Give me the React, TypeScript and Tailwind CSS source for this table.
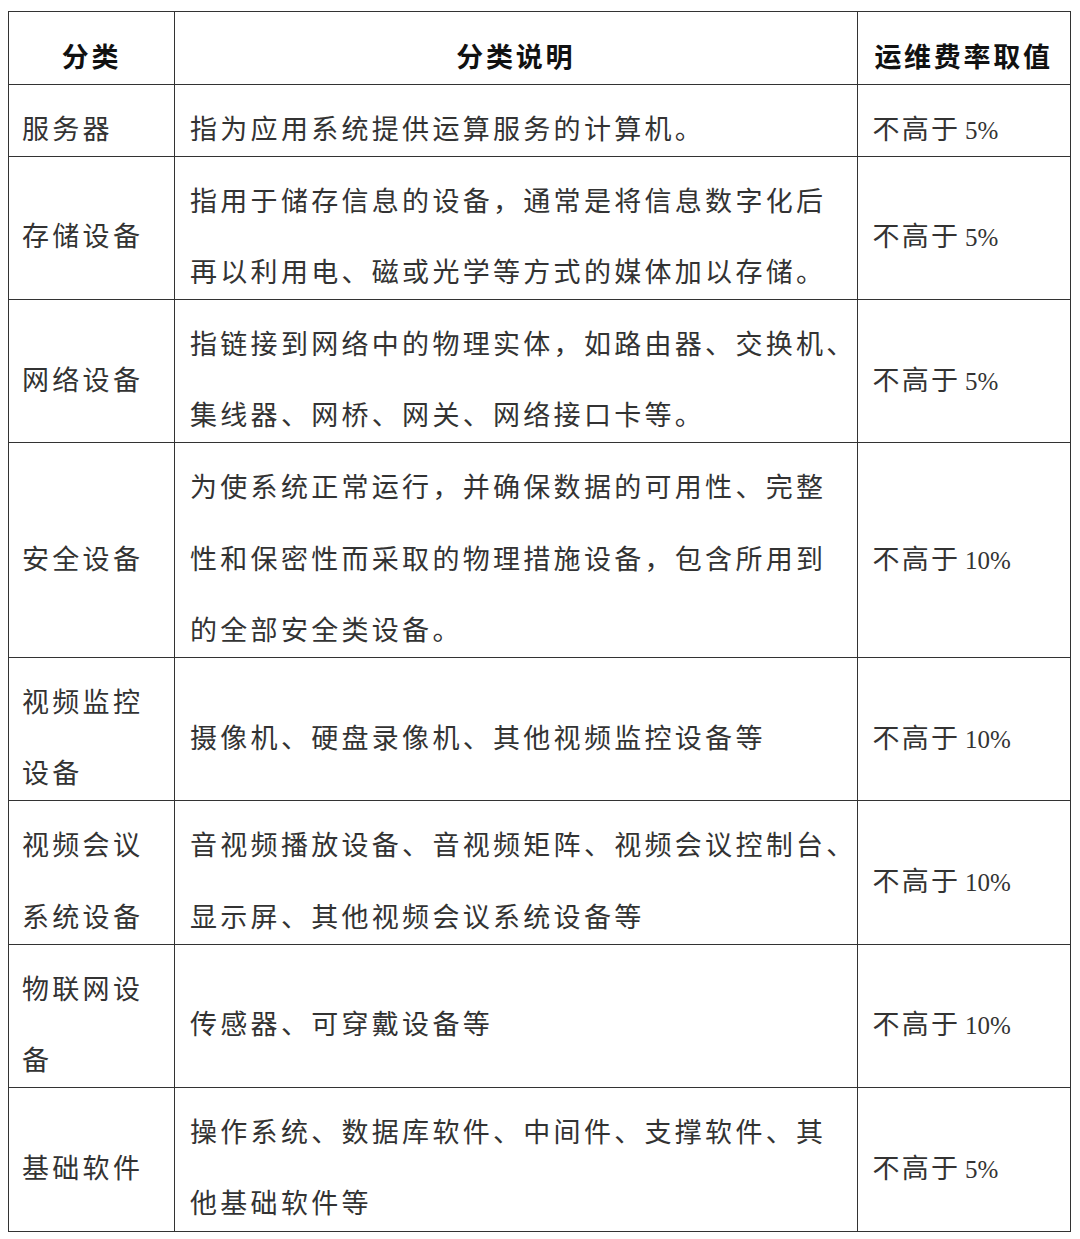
type Row = {
  cat: string[]
  desc: string[]
  rate: string
}

const rows: Row[] = [
  { cat: ['服务器'], desc: ['指为应用系统提供运算服务的计算机。'], rate: '5%' },
  {
    cat: ['存储设备'],
    desc: ['指用于储存信息的设备，通常是将信息数字化后', '再以利用电、磁或光学等方式的媒体加以存储。'],
    rate: '5%',
  },
  {
    cat: ['网络设备'],
    desc: ['指链接到网络中的物理实体，如路由器、交换机、', '集线器、网桥、网关、网络接口卡等。'],
    rate: '5%',
  },
  {
    cat: ['安全设备'],
    desc: [
      '为使系统正常运行，并确保数据的可用性、完整',
      '性和保密性而采取的物理措施设备，包含所用到',
      '的全部安全类设备。',
    ],
    rate: '10%',
  },
  { cat: ['视频监控', '设备'], desc: ['摄像机、硬盘录像机、其他视频监控设备等'], rate: '10%' },
  {
    cat: ['视频会议', '系统设备'],
    desc: ['音视频播放设备、音视频矩阵、视频会议控制台、', '显示屏、其他视频会议系统设备等'],
    rate: '10%',
  },
  { cat: ['物联网设', '备'], desc: ['传感器、可穿戴设备等'], rate: '10%' },
  {
    cat: ['基础软件'],
    desc: ['操作系统、数据库软件、中间件、支撑软件、其', '他基础软件等'],
    rate: '5%',
  },
]

const cell = 'border-r-[1.5px] border-b-[1.5px] border-[#333] flex flex-col justify-center'
const headCell = 'border-r-[1.5px] border-b-[1.5px] border-[#333] h-[72.5px] pt-[20px] flex items-center justify-center font-bold text-[#111] tracking-[2.7px]'

// each text line sits in its own box, ink a little below the middle like the Word original
const Line = ({ children }: { children: React.ReactNode }) => (
  <div className="h-[71.2px] pt-[20px] leading-[51.2px] whitespace-nowrap">{children}</div>
)

export default function App() {
  return (
    <div
      className="min-h-[1239px] bg-white pt-[11px] pl-[8px] text-[27px] tracking-[3.3px] text-[#333]"
      style={{ fontFamily: '"Liberation Serif", "Noto Sans CJK SC", serif' }}
    >
      <div className="grid w-fit grid-cols-[166px_682.5px_213px] border-l-[1.5px] border-t-[1.5px] border-[#333]">
        {/* Header */}
        <div className={headCell}>分类</div>
        <div className={headCell}>分类说明</div>
        <div className={headCell}>运维费率取值</div>

        {rows.map((row, i) => (
          <div key={i} className="contents">
            <div className={`${cell} pl-[13px]`}>
              {row.cat.map((t) => (
                <Line key={t}>{t}</Line>
              ))}
            </div>
            <div className={`${cell} pl-[15px]`}>
              {row.desc.map((t) => (
                <Line key={t}>{t}</Line>
              ))}
            </div>
            <div className={`${cell} pl-[15px]`}>
              <Line>
                <span className="tracking-[2.2px]">不高于</span>
                <span className="ml-[5px] text-[25px] tracking-normal">{row.rate}</span>
              </Line>
            </div>
          </div>
        ))}
      </div>
    </div>
  )
}
